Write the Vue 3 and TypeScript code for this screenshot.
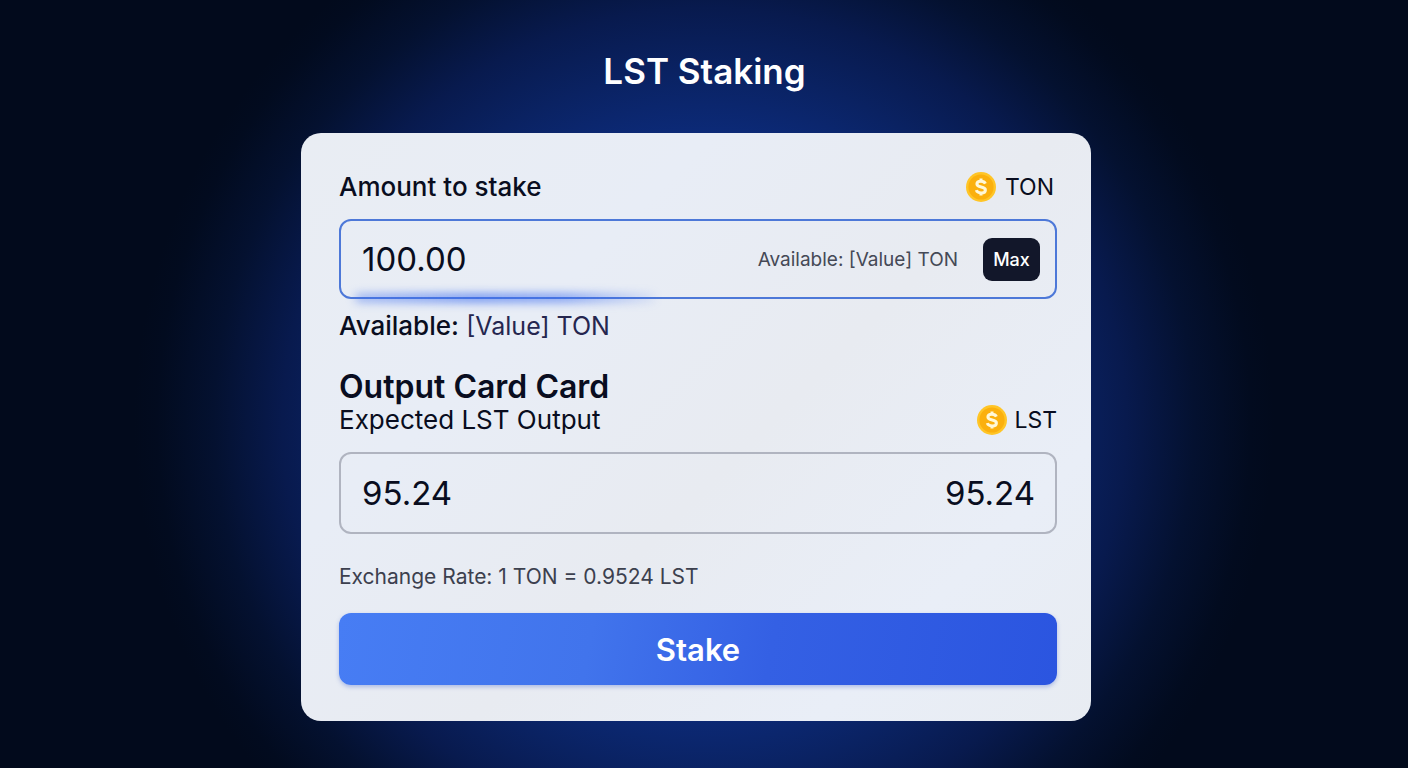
<script setup lang="ts">
import { computed, ref } from 'vue'

const rate = 0.9524
const amount = ref('100.00')
const output = computed(() => ((Number(amount.value) || 0) * rate).toFixed(2))

function setMax(): void {
  amount.value = '100.00'
}
</script>

<template>
  <main class="page">
    <h1 class="title">LST Staking</h1>

    <form class="card" @submit.prevent>
      <div class="row">
        <label class="label strong" for="amount">Amount to stake</label>
        <span class="token inset">
          <svg class="coin" viewBox="0 0 30 30" aria-hidden="true">
            <circle cx="15" cy="15" r="15" fill="#ffc526" />
            <circle cx="15" cy="15" r="12.6" fill="#fbb00d" />
            <path d="M19.4 11.6C18.6 9.9 17.2 9.2 15 9.2c-2.5 0-4.1 1.1-4.1 2.9 0 4.1 8.5 1.8 8.5 5.8 0 1.9-1.7 3-4.3 3-2.4 0-4.2-1-4.8-2.8M15 6.4v2.8M15 20.8v2.8" fill="none" stroke="#fff8d8" stroke-width="3" />
          </svg>
          TON
        </span>
      </div>

      <div class="field active">
        <input id="amount" v-model="amount" class="value" type="text" inputmode="decimal" />
        <span class="hint">Available: [Value] TON</span>
        <button class="max" type="button" @click="setMax">Max</button>
      </div>

      <p class="available"><span class="strong">Available:</span> <span class="balance">[Value] TON</span></p>

      <h2 class="heading">Output Card Card</h2>
      <div class="row">
        <label class="label" for="output">Expected LST Output</label>
        <span class="token tight">
          <svg class="coin" viewBox="0 0 30 30" aria-hidden="true">
            <circle cx="15" cy="15" r="15" fill="#ffc526" />
            <circle cx="15" cy="15" r="12.6" fill="#fbb00d" />
            <path d="M19.4 11.6C18.6 9.9 17.2 9.2 15 9.2c-2.5 0-4.1 1.1-4.1 2.9 0 4.1 8.5 1.8 8.5 5.8 0 1.9-1.7 3-4.3 3-2.4 0-4.2-1-4.8-2.8M15 6.4v2.8M15 20.8v2.8" fill="none" stroke="#fff8d8" stroke-width="3" />
          </svg>
          LST
        </span>
      </div>

      <div class="field result">
        <input id="output" :value="output" class="value" type="text" readonly />
        <output class="total" for="amount">{{ output }}</output>
      </div>

      <p class="rate">Exchange Rate: 1 TON = {{ rate }} LST</p>
      <button class="stake" type="submit">Stake</button>
    </form>
  </main>
</template>

<style>
body {
  margin: 0;
  background: #020a1c;
}
</style>

<style scoped>
.page {
  box-sizing: border-box;
  min-height: 100vh;
  padding: 49px 16px 47px 0;
  display: flex;
  flex-direction: column;
  align-items: center;
  gap: 40px;
  font-family: Inter, "Liberation Sans", sans-serif;
  color: #090d20;
  background: radial-gradient(ellipse 570px 560px at 50% 55%, #10389c 0%, #0e3088 40%, #0c2a78 51%, #0a2262 63%, #081a4e 74%, #041130 86%, #020b1f 96%, #020a1c 100%);
}

.title {
  margin: 0;
  padding-left: 17px;
  font-size: 35px;
  line-height: 44px;
  font-weight: 600;
  color: #fff;
}

.card {
  box-sizing: border-box;
  width: 100%;
  max-width: 790px;
  padding: 38px 34px 36px 38px;
  border-radius: 20px;
  background: linear-gradient(135deg, #e9edf3 0%, #e8edf6 30%, #e8ebf1 55%, #e9eef7 80%, #e8ecf2 100%);
}

.row {
  display: flex;
  align-items: center;
  justify-content: space-between;
  line-height: 32px;
}

.label {
  font-size: 26px;
}

.strong {
  font-weight: 500;
}

.token {
  display: flex;
  align-items: center;
  gap: 9px;
  font-size: 23px;
}

.inset {
  padding-right: 3px;
}

.tight {
  gap: 7px;
}

.coin {
  width: 30px;
  height: 30px;
}

.field {
  position: relative;
  box-sizing: border-box;
  height: 80px;
  margin-top: 16px;
  padding: 0 15px 0 21px;
  display: flex;
  align-items: center;
  border: 2px solid #4d78d8;
  border-radius: 12px;
}

.active::after {
  content: "";
  position: absolute;
  left: 14px;
  bottom: -5px;
  width: 300px;
  height: 8px;
  border-radius: 4px;
  background: linear-gradient(90deg, rgba(62, 110, 240, 0.5), rgba(62, 110, 240, 0.8) 40%, rgba(62, 110, 240, 0.7) 70%, rgba(62, 110, 240, 0.1));
  filter: blur(5px);
  pointer-events: none;
}

.result {
  height: 82px;
  padding-right: 20px;
  border-color: #b0b4c0;
}

.value {
  flex: 1;
  min-width: 0;
  padding: 0;
  border: 0;
  outline: 0;
  background: transparent;
  font: inherit;
  font-size: 33px;
  color: inherit;
}

.total {
  font-size: 33px;
}

.hint {
  font-size: 19px;
  color: #454956;
}

.max {
  width: 57px;
  height: 43px;
  margin-left: 25px;
  padding: 0;
  border: 0;
  border-radius: 9px;
  background: #12172a;
  color: #fff;
  font: inherit;
  font-size: 18px;
  font-weight: 500;
}

.available {
  margin: 11px 0 0;
  font-size: 26px;
  line-height: 32px;
}

.balance {
  font-size: 25px;
  color: #25264f;
}

.heading {
  margin: 27px 0 0;
  font-size: 32px;
  line-height: 35px;
  font-weight: 600;
}

.rate {
  margin: 29px 0 0;
  font-size: 21px;
  line-height: 28px;
  color: #3c404e;
}

.stake {
  display: block;
  width: 100%;
  height: 72px;
  margin-top: 22px;
  padding: 0;
  border: 0;
  border-radius: 12px;
  background: linear-gradient(100deg, #477df4 0%, #4174ec 35%, #3460e4 60%, #2b55e0 100%);
  box-shadow: 0 2px 4px rgba(60, 95, 200, 0.35);
  color: #fff;
  font: inherit;
  font-size: 31px;
  font-weight: 600;
}
</style>
